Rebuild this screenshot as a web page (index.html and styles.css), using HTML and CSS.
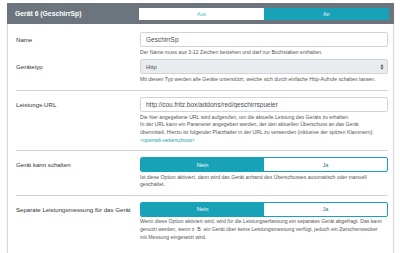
FILE: index.html
```html
<!DOCTYPE html>
<html lang="de">
<head>
    <meta charset="UTF-8">
    <meta name="viewport" content="width=device-width, initial-scale=1.0">
    <title>Gerät 6 (GeschirrSp)</title>
    <link rel="stylesheet" href="styles.css">
</head>
<body>
    <div class="card">
        <div class="card-header">
            <span class="card-title">Gerät 6 (GeschirrSp)</span>
            <div class="switch">
                <span class="switch-off">Aus</span>
                <span class="switch-on">An</span>
            </div>
        </div>

        <div class="card-body">
            <div class="group">
                <div class="row">
                    <label class="row-label" for="devName">Name</label>
                    <div class="row-control">
                        <input type="text" id="devName" class="field" value="GeschirrSp">
                        <p class="help">Der Name muss aus 3-12 Zeichen bestehen und darf nur Buchstaben enthalten.</p>
                    </div>
                </div>
                <div class="row">
                    <label class="row-label">Gerätetyp</label>
                    <div class="row-control">
                        <div class="field field-disabled">
                            <span>Http</span>
                            <svg class="select-arrows" width="4" height="6" viewBox="0 0 4 6">
                                <path d="M2 0.3 L3.6 2.4 H0.4 Z M2 5.7 L3.6 3.6 H0.4 Z" fill="#555"/>
                            </svg>
                        </div>
                        <p class="help">Mit diesen Typ werden alle Geräte unterstützt, welche sich durch einfache Http-Aufrufe schalten lassen.</p>
                    </div>
                </div>
            </div>

            <div class="group">
                <div class="row">
                    <label class="row-label" for="devUrl">Leistungs-URL</label>
                    <div class="row-control">
                        <input type="text" id="devUrl" class="field" value="http://cou.fritz.box/addons/red/geschirrspueler">
                        <p class="help">
                            Die hier angegebene URL wird aufgerufen, um die aktuelle Leistung des Geräts zu erhalten.<br>
                            In der URL kann ein Parameter angegeben werden, der den aktuellen Überschuss an das Gerät<br>
                            übermittelt. Hierzu ist folgender Platzhalter in der URL zu verwenden (inklusive der spitzen Klammern):<br>
                            <a href="#">&lt;openwb-ueberschuss&gt;</a>
                        </p>
                    </div>
                </div>
            </div>

            <div class="group">
                <div class="row">
                    <label class="row-label">Gerät kann schalten</label>
                    <div class="row-control">
                        <div class="choice">
                            <span class="active">Nein</span>
                            <span>Ja</span>
                        </div>
                        <p class="help">Ist diese Option aktiviert, dann wird das Gerät anhand des Überschusses automatisch oder manuell geschaltet.</p>
                    </div>
                </div>
            </div>

            <div class="group">
                <div class="row">
                    <label class="row-label">Separate Leistungsmessung für das Gerät</label>
                    <div class="row-control">
                        <div class="choice">
                            <span class="active">Nein</span>
                            <span>Ja</span>
                        </div>
                        <p class="help">
                            Wenn diese Option aktiviert wird, wird für die Leistungserfassung ein separates Gerät abgefragt. Das kann genutzt werden, wenn z. B. ein Gerät über keine Leistungsmessung verfügt, jedoch ein Zwischenstecker<br>
                            mit Messung eingesetzt wird.
                        </p>
                    </div>
                </div>
            </div>
        </div>
    </div>
</body>
</html>
```

FILE: styles.css
```css
* {
    box-sizing: border-box;
}

body {
    margin: 0;
    padding: 3px 6px 4px 7px;
    font-family: "Liberation Sans", Arial, sans-serif;
    color: #333;
    background-color: #fff;
}

.card {
    border: 1px solid #d9d9d9;
    border-top: none;
    box-shadow: 0 1px 2px rgba(0,0,0,0.08);
}

.card-header {
    display: flex;
    align-items: center;
    height: 21px;
    padding: 0 5px 0 8px;
    margin: 0 -1px;
    background-color: #6c757d;
}

.card-title {
    width: 124px;
    color: #fff;
    font-weight: bold;
    font-size: 6.8px;
}

.switch {
    flex: 1;
    display: flex;
    height: 12px;
    font-size: 5.2px;
}

.switch span {
    flex: 1;
    display: flex;
    align-items: center;
    justify-content: center;
}

.switch-off {
    background-color: #fff;
    color: #4fb6c6;
}

.switch-on {
    background-color: #17a2b8;
    color: #fff;
}

.card-body {
    padding: 0 5px 0 8px;
}

.group {
    padding: 6px 0 5.5px;
    border-bottom: 1px solid #d2d2d2;
}

.group:first-child {
    padding-top: 8px;
    padding-bottom: 6.5px;
}

.group:last-child {
    border-bottom: none;
    padding-bottom: 17px;
}

.row {
    display: grid;
    grid-template-columns: 124px 1fr;
}

.row + .row {
    margin-top: 3px;
}

.row-label {
    font-size: 6.1px;
    line-height: 15px;
    color: #333;
}

.field {
    display: block;
    width: 100%;
    height: 15px;
    margin: 0;
    padding: 0 5px;
    border: 1px solid #ced4da;
    border-radius: 2px;
    font-family: "Liberation Sans", Arial, sans-serif;
    font-size: 6.5px;
    color: #495057;
    background-color: #fff;
}

.field-disabled {
    display: flex;
    align-items: center;
    justify-content: space-between;
    padding-right: 3px;
    background-color: #e9ecef;
    font-size: 5.8px;
}

.help {
    margin: 1.6px 0 0;
    font-size: 5.15px;
    line-height: 7.7px;
    color: #555;
}

.help a {
    color: #17a2b8;
    text-decoration: none;
}

.choice {
    display: flex;
    height: 15px;
    border: 1px solid #17a2b8;
    border-radius: 2px;
    overflow: hidden;
    font-size: 5.6px;
}

.choice span {
    flex: 1;
    display: flex;
    align-items: center;
    justify-content: center;
    color: #1a7f8f;
}

.choice .active {
    background-color: #17a2b8;
    color: #fff;
}
```
